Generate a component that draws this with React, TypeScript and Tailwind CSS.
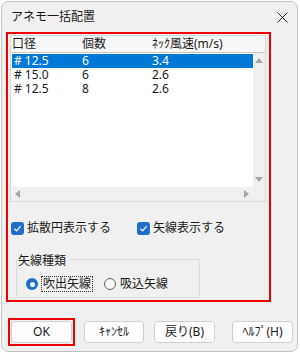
import React from "react";

const font = "font-['Noto_Sans','Noto_Sans_CJK_JP',sans-serif]";

function Check() {
  return (
    <span className="w-[13px] h-[13px] rounded-[3px] bg-[#1e6fc8] flex items-center justify-center shrink-0">
      <svg width="9" height="9" viewBox="0 0 9 9">
        <path d="M1.5 4.8 L3.6 6.8 L7.6 2.2" stroke="white" strokeWidth="1.2" fill="none" />
      </svg>
    </span>
  );
}

function Btn({ label, className = "" }: { label: string; className?: string }) {
  return (
    <div
      className={`h-[22px] rounded-[4px] border border-[#d0d0d0] bg-[#fdfdfd] flex items-center justify-center text-[12px] text-[#1a1a1a] ${className}`}
    >
      {label}
    </div>
  );
}

export default function App() {
  const rows = [
    ["# 12.5", "6", "3.4"],
    ["# 15.0", "6", "2.6"],
    ["# 12.5", "8", "2.6"],
  ];
  return (
    <div className={`w-[300px] h-[354px] bg-white ${font} text-[#1a1a1a]`}>
      <div className="ml-[1px] mt-[1px] w-[297px] h-[351px] bg-[#f0f0f0] border border-[#c4c4c4] rounded-[7px] flex flex-col">
        {/* title bar */}
        <div className="h-[30px] flex items-center justify-between pl-[9px] pr-[9px] shrink-0">
          <span className="text-[12px] leading-none">アネモ一括配置</span>
          <svg width="11" height="11" viewBox="0 0 11 11">
            <path d="M0.5 0.5 L10.5 10.5 M10.5 0.5 L0.5 10.5" stroke="#222" strokeWidth="1" />
          </svg>
        </div>
        {/* red box */}
        <div className="ml-[4px] w-[265px] h-[270px] border-2 border-[#ee0000] flex flex-col">
          {/* list view */}
          <div className="mt-[1px] ml-[2px] w-[256px] h-[167px] border border-[#d8d8d8] bg-white flex flex-col">
            <div className="h-[17px] bg-[#f7f7f7] border-b border-[#c8c8c8] flex items-center text-[12px] leading-[14px] shrink-0">
              <span className="w-[71px] pl-[1px]">口径</span>
              <span className="w-[70px]">個数</span>
              <span>ﾈｯｸ風速(m/s)</span>
            </div>
            <div className="flex flex-1 min-h-0">
              <div className="flex-1 flex flex-col pt-[1px] pl-[1px]">
                {rows.map((r, i) => (
                  <div
                    key={i}
                    className={`h-[14px] flex items-center text-[12px] leading-[14px] ${
                      i === 0 ? "bg-[#0078d7] text-white" : ""
                    }`}
                  >
                    <span className="w-[70px] pl-[2px]">{r[0]}</span>
                    <span className="w-[70px]">{r[1]}</span>
                    <span>{r[2]}</span>
                  </div>
                ))}
              </div>
              <div className="w-[12px] bg-[#f0f0f0] flex flex-col items-center justify-between py-[5px]">
                <svg width="8" height="5" viewBox="0 0 8 5">
                  <path d="M0 5 L4 0 L8 5 Z" fill="#a3a3a3" />
                </svg>
                <svg width="8" height="5" viewBox="0 0 8 5">
                  <path d="M0 0 L4 5 L8 0 Z" fill="#a3a3a3" />
                </svg>
              </div>
            </div>
            <div className="h-[14px] flex shrink-0">
              <div className="flex-1 bg-[#f0f0f0] flex items-center justify-between px-[4px]">
                <svg width="5" height="8" viewBox="0 0 5 8">
                  <path d="M5 0 L0 4 L5 8 Z" fill="#a3a3a3" />
                </svg>
                <svg width="5" height="8" viewBox="0 0 5 8">
                  <path d="M0 0 L5 4 L0 8 Z" fill="#a3a3a3" />
                </svg>
              </div>
              <div className="w-[12px] bg-[#f0f0f0]" />
            </div>
          </div>
          {/* checkboxes */}
          <div className="mt-[18px] flex items-center text-[12px] leading-none h-[16px]">
            <div className="ml-[3px] flex items-center gap-[3px] w-[126px]">
              <Check />
              <span>拡散円表示する</span>
            </div>
            <div className="flex items-center gap-[3px]">
              <Check />
              <span>矢線表示する</span>
            </div>
          </div>
          {/* group box */}
          <div className="relative mt-[23px] ml-[8px] w-[184px] h-[39px] border border-[#dcdcdc] rounded-[2px]">
            <span className="absolute left-[1px] top-[-5px] bg-[#f0f0f0] pr-[4px] text-[12px] leading-none">
              矢線種類
            </span>
            <div className="mt-[16px] flex items-center text-[12px] leading-none">
              <div className="ml-[9px] flex items-center gap-[3px] w-[78px]">
                <span className="w-[12px] h-[12px] rounded-full bg-[#1e6fc8] flex items-center justify-center">
                  <span className="w-[5px] h-[5px] rounded-full bg-white" />
                </span>
                <span className="border border-dotted border-[#333] px-[1px] py-[1px]">吹出矢線</span>
              </div>
              <div className="flex items-center gap-[4px]">
                <span className="w-[12px] h-[12px] rounded-full border border-[#666] bg-[#f8f8f8]" />
                <span>吸込矢線</span>
              </div>
            </div>
          </div>
        </div>
        {/* buttons */}
        <div className="mt-[16px] flex items-center">
          <div className="ml-[6px] w-[67px] h-[28px] border-2 border-[#ee0000] flex items-center justify-center">
            <Btn label="OK" className="w-[61px]" />
          </div>
          <Btn label="ｷｬﾝｾﾙ" className="ml-[9px] w-[60px]" />
          <Btn label="戻り(B)" className="ml-[10px] w-[61px]" />
          <Btn label="ﾍﾙﾌﾟ(H)" className="ml-[17px] w-[61px]" />
        </div>
      </div>
    </div>
  );
}
